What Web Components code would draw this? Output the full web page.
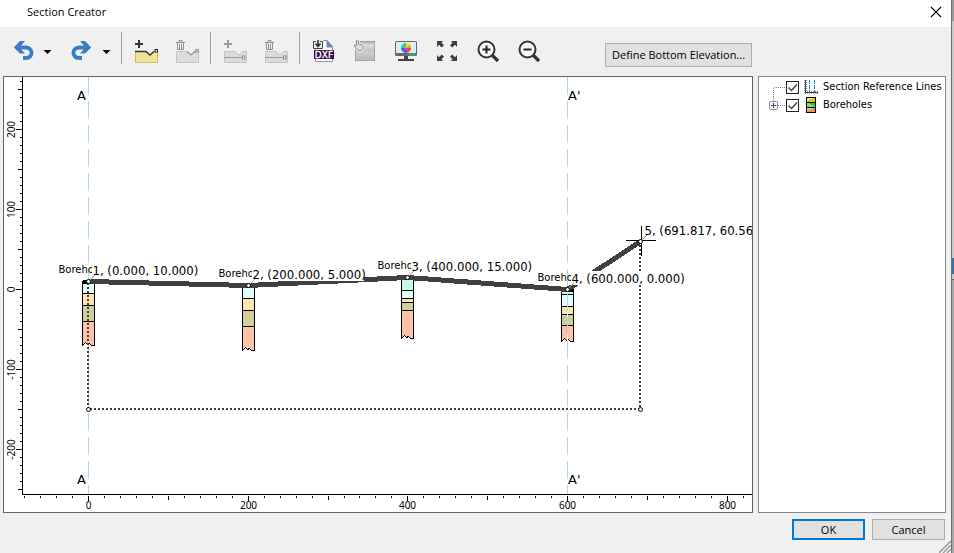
<!DOCTYPE html>
<html lang="en">
<head>
<meta charset="utf-8">
<title>Section Creator</title>
<style>
  html, body { height: 100%; margin: 0; }
  body { background: #c9c9c9; font: 11px/16px "Open Sans", "Noto Sans", sans-serif; color: #000; overflow: hidden; }
</style>
</head>
<body>
<section-dialog caption="Section Creator">
  <tool-bar slot="tools"></tool-bar>
  <section-plot slot="main"></section-plot>
  <layer-tree slot="side"></layer-tree>
  <push-button slot="actions" kind="primary">OK</push-button>
  <push-button slot="actions">Cancel</push-button>
</section-dialog>

<script>
const define = (name, html, setup) => customElements.define(name, class extends HTMLElement {
  constructor() {
    super();
    this.attachShadow({ mode: 'open' });
  }
  connectedCallback() {
    if (this.shadowRoot.childNodes.length) return;
    const t = document.createElement('template');
    t.innerHTML = html;
    this.shadowRoot.append(t.content.cloneNode(true));
    if (setup) setup(this, this.shadowRoot);
  }
});

/* ---------- dialog frame ---------- */
define('section-dialog', `
<style>
  :host { display: grid; grid-template-columns: 1fr 3px; height: 100vh; }
  .window { display: grid; grid-template-rows: 27px 49px 1fr 40px; background: #f0f0f0; min-width: 0; }
  header { display: flex; align-items: center; justify-content: space-between; background: #fff; padding: 0 9px 4px 27px; }
  h1 { font: inherit; margin: 0; }
  header button { border: 0; background: none; padding: 0; width: 12px; height: 12px; display: grid; }
  main { display: grid; grid-template-columns: 1fr 188px; gap: 5px; padding: 0 5px 0 3px; min-height: 0; }
  footer { display: flex; justify-content: flex-end; align-items: flex-start; gap: 7px; padding: 6px 6px 0 0; position: relative; }
  .grip { position: absolute; right: 0; bottom: 0; }
  .edge { border-left: 1px solid #6e6e6e; display: grid; grid-template-rows: 21px 237px 16px 5px 1fr; }
  .edge i:nth-child(1) { background: #9a9a9a; }
  .edge i:nth-child(3) { background: #2f74b5; }
  .edge i:nth-child(5) { background: #a8a8a8; border-top: 1px solid #666; }
</style>
<div class="window">
  <header><h1></h1>
    <button aria-label="Close"><svg width="12" height="12" viewBox="0 0 12 12"><path d="M1 1 11 11M11 1 1 11" stroke="#000" stroke-width="1.1" fill="none"/></svg></button>
  </header>
  <slot name="tools"></slot>
  <main><slot name="main"></slot><slot name="side"></slot></main>
  <footer><slot name="actions"></slot>
    <svg class="grip" width="12" height="12" viewBox="0 0 12 12"><path d="M0 12 12 0M4 12 12 4M8 12 12 8" stroke="#a0a0a0" stroke-width="1.6"/><path d="M2 12 12 2M6 12 12 6M10 12 12 10" stroke="#fff"/></svg>
  </footer>
</div>
<div class="edge"><i></i><i></i><i></i><i></i><i></i></div>`,
(el, root) => { root.querySelector('h1').textContent = el.getAttribute('caption'); });

/* ---------- push button ---------- */
define('push-button', `
<style>
  :host { display: inline-block; }
  button { font: inherit; color: inherit; box-sizing: border-box; min-width: 73px; height: 21px; padding: 0 6px;
    background: #e1e1e1; border: 1px solid #adadad; white-space: nowrap; display: grid; place-items: center; }
  :host([kind=primary]) button { border: 2px solid #0078d7; }
  :host([kind=tall]) button { height: 24px; }
</style>
<button><span><slot></slot></span></button>`);

/* ---------- toolbar ---------- */
const section = (fill, edge) => `
  <path d="M.5 11.5H11L15 15 19 11.5H22.5V22.5H.5Z" fill="${fill}" stroke="${edge}"/>`;
const plus = c => `<path d="M4 0V8M0 4H8" stroke="${c}" stroke-width="2"/>`;
const bin = `<g stroke="#8e8e8e" fill="none"><path d="M0 2.5H9M3 2V.5H6V2M1.5 3V9.5H7.5V3M3.5 4V9M5.5 4V9"/></g>`;
const lens = sign => `
  <path d="M15 15 21 21" stroke="#333" stroke-width="3.2"/>
  <circle cx="9.500" cy="9.500" r="8" fill="#fafafa" stroke="#333" stroke-width="2"/>
  <path d="${sign}" stroke="#222" stroke-width="2"/>`;
const wheel = ['#f7e01e','#f79a1c','#f0412c','#e0309a','#7a3ce0','#2f6cf0','#22c8e0','#3fcf3f']
  .map((c, i) => {
    const a = (i - 2) * Math.PI / 4, b = a + Math.PI / 4, p = t => (11 + 5 * Math.cos(t)).toFixed(2) + ' ' + (8 + 5 * Math.sin(t)).toFixed(2);
    return `<path d="M11 8 L${p(a)} A5 5 0 0 1 ${p(b)}Z" fill="${c}"/>`;
  }).join('');
const corner = 'M1 1H7L5.500 2.800 8 5.300 5.800 7.500 3 4.800 1 7Z';
const icons = {
  undo: `<path d="M5 7.500H12.500C20.500 7.500 20.500 18 13 18H10" fill="none" stroke="#3b7dc4" stroke-width="3.800"/><path d="M.800 7.500 7 1H12L6.500 7.500 12 13.500H7Z" fill="#3b7dc4"/>`,
  addSection: section('#f3e494', '#c9bb78') + `<path d="M0 11.5H11L15 15 19 11.5" fill="none" stroke="#333" stroke-width="1.5"/><rect x="20" y="9.500" width="2.500" height="2.500" fill="#fff" stroke="#222"/>` + plus('#333'),
  delSection: section('#dcdcdc', '#c4c4c4') + `<path d="M11 11.5 15 15 20 10.500" fill="none" stroke="#999" stroke-width="1.300"/><rect x="20" y="9.500" width="2.500" height="2.500" fill="#eee" stroke="#8a8a8a"/>` + bin,
  addLayer: section('#dcdcdc', '#c4c4c4') + `<path d="M0 17.500H18" stroke="#999"/><rect x="18.500" y="16" width="2.500" height="3" fill="#eee" stroke="#8a8a8a"/>` + plus('#999'),
  delLayer: section('#dcdcdc', '#c4c4c4') + `<path d="M0 17.500H18" stroke="#999"/><rect x="18.500" y="16" width="2.500" height="3" fill="#eee" stroke="#8a8a8a"/>` + bin,
  dxf: `<path d="M2.500 3.500V21.500H19.500V6.500L14 .5H7" fill="#fff" stroke="#8796ad"/><path d="M14 .5V7H19.500Z" fill="#7088a8" stroke="#7088a8"/>
    <path d="M0 0H10V9H0Z" fill="#f0f0f0"/><path d="M3 1.500H.5V8.500H9.500V1.500H7" stroke="#444" fill="none"/><path d="M5 0V6M2.500 3.500 5 6.500 7.500 3.500" stroke="#333" stroke-width="1.600" fill="none"/>
    <rect x="1" y="10" width="20" height="9" fill="#3b0a45"/><text x="11" y="18" text-anchor="middle" font-family="DejaVu Sans" font-size="9" fill="#fff" stroke="#fff" stroke-width=".3">DXF</text>`,
  hand: `<defs><linearGradient id="g" x2="0" y2="1"><stop stop-color="#aaa"/><stop offset=".2" stop-color="#dedede"/><stop offset=".5" stop-color="#c2c2c2"/><stop offset=".55" stop-color="#cfcfcf"/><stop offset="1" stop-color="#bababa"/></linearGradient></defs>
    <rect x="1.500" y="1.500" width="19" height="19" fill="url(#g)" stroke="#a2a2a2"/>
    <path d="M2.500 .5C3.500-.2 4.500.5 4.500 1.500V4L8.500 5C10 6 9.500 9 7.500 10.500H4L0 6C0 4.500 1.500 4.500 2.500 6Z" fill="#dcdcdc" stroke="#f4f4f4" stroke-width="2.500"/>
    <path d="M2.500 .5C3.500-.2 4.500.5 4.500 1.500V4L8.500 5C10 6 9.500 9 7.500 10.500H4L0 6C0 4.500 1.500 4.500 2.500 6Z" fill="#dcdcdc" stroke="#8d8d8d"/>`,
  monitor: `<rect x="0" y="1" width="22" height="15" rx="1.500" fill="#666"/><rect x="1" y="2" width="20" height="11" fill="#d8effb"/>${wheel}
    <path d="M14 14.500H20" stroke="#27c45a" stroke-width="2"/><path d="M9 16H13V19H19V21H3V19H9Z" fill="#444"/>`,
  extent: `<g fill="#3d3d46"><path d="${corner}"/><path transform="matrix(-1 0 0 1 22 0)" d="${corner}"/><path transform="matrix(1 0 0 -1 0 22)" d="${corner}"/><path transform="matrix(-1 0 0 -1 22 22)" d="${corner}"/></g>`,
  zoomIn: lens('M9.500 5.500V13.500M5.500 9.500H13.500'),
  zoomOut: lens('M5.500 9.500H13.500')
};
icons.redo = `<g transform="matrix(-1 0 0 1 20 0)">${icons.undo}</g>`;

define('tool-button', `
<style>
  :host { display: block; }
  button { border: 0; background: none; padding: 0; display: grid; width: 24px; height: 24px; }
  svg { overflow: visible; }
</style>
<button><svg width="24" height="24" viewBox="0 0 24 24"></svg></button>`,
(el, root) => {
  root.querySelector('svg').innerHTML = icons[el.getAttribute('icon')];
  root.querySelector('button').setAttribute('aria-label', el.getAttribute('label'));
});

define('tool-bar', `
<style>
  :host { display: flex; align-items: flex-start; padding: 5px 0 0 13px; }
  .group { display: flex; gap: 17px; padding-top: 8px; }
  .history { gap: 20px; }
  .history > div { display: flex; align-items: center; gap: 6px; }
  .menu { border: 0; background: none; padding: 0; width: 9px; height: 24px; display: grid; place-items: center; }
  hr { width: 1px; height: 32px; border: 0; margin: 0 13px 0 10px; background: #a0a0a0; }
  push-button { margin: 11px 0 0 63px; }
</style>
<div class="group history">
  <div><tool-button icon="undo" label="Undo"></tool-button><button class="menu" aria-label="Undo list"><svg width="9" height="4"><path d="M.5 0H8.500L4.500 4Z"/></svg></button></div>
  <div><tool-button icon="redo" label="Redo"></tool-button><button class="menu" aria-label="Redo list"><svg width="9" height="4"><path d="M.5 0H8.500L4.500 4Z"/></svg></button></div>
</div>
<hr>
<div class="group"><tool-button icon="addSection" label="Add section"></tool-button><tool-button icon="delSection" label="Delete section"></tool-button></div>
<hr>
<div class="group"><tool-button icon="addLayer" label="Add layer"></tool-button><tool-button icon="delLayer" label="Delete layer"></tool-button></div>
<hr>
<div class="group">
  <tool-button icon="dxf" label="Import drawing"></tool-button><tool-button icon="hand" label="Pick"></tool-button><tool-button icon="monitor" label="Display options"></tool-button><tool-button icon="extent" label="Zoom to extent"></tool-button><tool-button icon="zoomIn" label="Zoom in"></tool-button><tool-button icon="zoomOut" label="Zoom out"></tool-button>
</div>
<push-button kind="tall">Define Bottom Elevation...</push-button>`);

/* ---------- layer tree ---------- */
define('tree-item', `
<style>
  :host { display: grid; grid-template-columns: 27px 1fr; align-items: center; height: 18px; }
  .branch { display: block; }
  label { display: flex; align-items: center; white-space: nowrap; }
  .tick { display: grid; margin-right: 5px; }
  .tick > * { grid-area: 1 / 1; }
  input { appearance: none; box-sizing: border-box; width: 13px; height: 13px; margin: 0; border: 1px solid #222; background: #fff; }
  .tick svg { pointer-events: none; visibility: hidden; }
  input:checked + svg { visibility: visible; }
  ::slotted(svg) { margin-right: 5px; }
</style>
<svg class="branch" width="27" height="18"></svg>
<label><span class="tick"><input type="checkbox" checked><svg width="13" height="13"><path d="M2.500 6.500 5.500 9.500 11 3.500" fill="none" stroke="#444" stroke-width="1.500"/></svg></span><slot name="icon"></slot><slot></slot></label>`,
(el, root) => {
  root.querySelector('.branch').innerHTML = el.hasAttribute('parent')
    ? `<path d="M14.500 0V5M19 9.500H26" stroke="#888" stroke-dasharray="1 1"/><rect x="10.500" y="5.500" width="8" height="8" rx="1" fill="#f4f4f4" stroke="#919191"/><path d="M12 9.500H17M14.500 7V12" stroke="#2b4fa3"/>`
    : `<path d="M26 9.500H14.500V18" fill="none" stroke="#888" stroke-dasharray="1 1"/>`;
});
define('layer-tree', `
<style>
  :host { display: block; box-sizing: border-box; background: #fff; border: 1px solid #828790; padding-top: 1px; overflow: hidden;
    font-family: "DejaVu Sans Condensed", "Liberation Sans", sans-serif; }
</style>
<tree-item>
  <svg slot="icon" width="14" height="14"><path d="M1.500 0V12.500M1 12.500H14" stroke="#333" stroke-dasharray="1 1" stroke-width="2"/><path d="M1.500 0V12.500H13" fill="none" stroke="#444"/><path d="M5.500 0V12M10.500 0V12" stroke="#1588cc" stroke-dasharray="4 1"/></svg>
  Section Reference Lines</tree-item>
<tree-item parent>
  <svg slot="icon" width="14" height="16"><rect x="2" width="10" height="16"/><path d="M3 1H11V5H3Z" fill="#e0c818"/><path d="M3 1H9L3 4Z" fill="#f5ec8c"/><path d="M3 6H11V10H3Z" fill="#36c43c"/><path d="M3 6H5L11 10H3Z" fill="#7be27e"/><path d="M3 11H11V15H3Z" fill="#e09a72"/><path d="M3 11H9L3 14Z" fill="#f4c3a8"/></svg>
  Boreholes</tree-item>`);

/* ---------- section plot ---------- */
const X0 = 84.5, Y0 = 212.5, SCALE = 0.7985;
const px = v => Math.round(X0 - 0.5 + v * SCALE) + 0.5;
const py = v => Math.round(Y0 - 0.5 - v * SCALE) + 0.5;
const points = [[0, 10, '1, (0.000, 10.000)'], [200, 5, '2, (200.000, 5.000)'], [400, 15, '3, (400.000, 15.000)'], [600, 0, '4, (600.000, 0.000)'], [691.817, 60.563, '5, (691.817, 60.563)']]
  .map(([x, y, t]) => ({ x: px(x), y: py(y), t }));
const C = { aqua: '#c6fbe6', cyan: '#e1ffff', sand: '#ffe5ab', olive: '#d0cf98', clay: '#ffc2a6' };
const holes = [
  [['cyan', 216], ['sand', 228], ['olive', 244], ['clay', 268]],
  [['cyan', 221], ['sand', 233], ['olive', 249], ['clay', 273]],
  [['aqua', 213], ['cyan', 221], ['sand', 225], ['olive', 233], ['clay', 261]],
  [['aqua', 217], ['cyan', 229], ['sand', 237], ['olive', 248], ['clay', 264]]
];
function plotMarkup() {
  let s = '';
  const line = (d, extra = '') => s += `<path d="${d}" fill="none" stroke="#000" ${extra}/>`;
  const text = (x, y, size, t, extra = '') => s += `<text x="${x}" y="${y}" font-size="${size}" ${extra}>${t}</text>`;
  const refLine = x => { line(`M${x} 0V417`, 'style="stroke:#fff"'); line(`M${x} 0V417`, 'style="stroke:#add8e6" stroke-dasharray="18 6"'); };

  refLine(px(0));
  holes.forEach((layers, i) => {
    const x = points[i].x - 6;
    let top = points[i].y;
    layers.forEach(([c, bottom], k) => {
      const b = bottom + 0.5, last = k === layers.length - 1;
      const tail = last ? `V${b}L${x + 9} ${b}L${x + 7} ${b - 2}L${x + 5} ${b - 1}L${x + 3} ${b - 3}L${x} ${b}Z` : `V${b}H${x}Z`;
      s += `<path d="M${x} ${top}H${x + 12}${tail}" fill="${C[c]}" stroke="#000"/>`;
      top = b;
    });
  });
  refLine(px(600));
  const first = points[0], fourth = points[3], end = points[4];
  const left = first.x - .5, right = end.x - .5;
  s += `<path d="M${first.x - 6} ${first.y - 2}h6v4h-6zM${fourth.x} ${fourth.y - 2}h6v4h-6z"/>`;
  s += `<path d="M${points.map(p => p.x + ' ' + p.y).join('L')}" fill="none" stroke="#404040" stroke-width="5"/>`;
  s += `<path d="M${left} 206V332M${left + 2} 332H${right}M${right} 164V332" fill="none" stroke="#404040" stroke-width="2" stroke-dasharray="2 2"/>`;
  holes.forEach((_, i) => text(points[i].x - 30, points[i].y - 9, 10, 'Boreho'));
  points.forEach(p => {
    s += `<rect x="${p.x + 3}" y="${p.y - 19}" width="112" height="14" fill="#fff"/>`;
    text(p.x + 4, p.y - 7, 13, p.t, 'class="label"');
    s += `<path d="M${p.x + 1} ${p.y - 1}l5 -5" stroke="#999"/>`;
  });
  line(`M${end.x - 15} ${end.y - 1}h30M${end.x + 1} ${end.y - 16}v30`);
  [...points, { x: first.x, y: 332.5 }, { x: end.x, y: 332.5 }]
    .forEach(p => s += `<circle class="smooth" cx="${p.x}" cy="${p.y}" r="2" fill="#fff" stroke="#000"/>`);
  for (const y of [23, 407]) { text(73, y, 13, 'A'); text(564, y, 13, "A'"); }

  s += `<rect x="0" y="0" width="18" height="435" fill="#fff"/>`;
  line('M18.500 0V417.500H748');
  for (let v = 260; v >= -250; v -= 10) {
    const w = v % 100 === 0 ? 6 : v % 50 === 0 ? 4 : 2;
    line(`M${18 - w} ${py(v)}H18`);
    if (v % 100 === 0) s += `<text transform="translate(11 ${py(v)}) rotate(-90)" text-anchor="middle" class="tick">${v}</text>`;
  }
  for (let v = -80; v <= 820; v += 20) {
    const h = v % 200 === 0 ? 5 : v % 100 === 0 ? 4 : 2;
    line(`M${px(v)} 419V${419 + h}`);
    if (v % 200 === 0) s += `<text x="${px(v)}" y="432" text-anchor="middle" class="tick">${v}</text>`;
  }
  return s;
}
define('section-plot', `
<style>
  :host { display: block; box-sizing: border-box; background: #fff; border: 1px solid #646464; overflow: hidden; min-width: 0; }
  svg { display: block; width: 100%; height: 100%; font-family: "DejaVu Sans", sans-serif; shape-rendering: crispEdges; }
  .smooth { shape-rendering: auto; }
  .label { font-family: "DejaVu Sans Condensed", "Noto Sans", sans-serif; }
  .tick { font-family: "Noto Sans", sans-serif; font-size: 10px; }
</style>
<svg viewBox="0 0 748 435" preserveAspectRatio="xMinYMin meet" role="img" aria-label="Section profile"></svg>`,
(el, root) => { root.querySelector('svg').innerHTML = plotMarkup(); });
</script>
</body>
</html>
